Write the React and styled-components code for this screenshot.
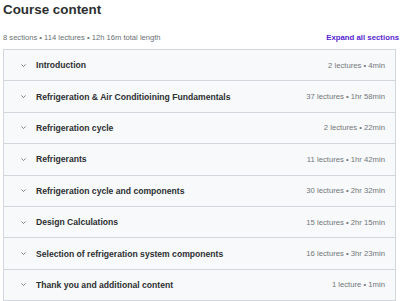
import React from "react";
import styled, { createGlobalStyle } from "styled-components";

const Global = createGlobalStyle`
  html, body { margin: 0; padding: 0; background: #fff; }
  body { font-family: "Liberation Sans", Arial, sans-serif; color: #2d2f31; }
`;

const Page = styled.div`
  padding: 0 1px 0 3px;
  width: 400px;
  box-sizing: border-box;
`;

const Title = styled.h2`
  margin: 0;
  padding-top: 2px;
  font-size: 13.4px;
  line-height: 16px;
  font-weight: 700;
  color: #2d2f31;
`;

const Header = styled.div`
  display: flex;
  justify-content: space-between;
  align-items: center;
  margin-top: 12px;
  height: 14px;
`;

const Summary = styled.span`
  font-size: 7.6px;
  color: #6a6f73;
`;

const Expand = styled.button`
  border: 0;
  background: none;
  padding: 0;
  font-family: inherit;
  font-size: 7.8px;
  font-weight: 700;
  color: #5624d0;
`;

const List = styled.div`
  margin-top: 5px;
  margin-right: 3px;
  border: 1px solid #d1d7dc;
  border-bottom: 0;
`;

const Row = styled.div`
  display: flex;
  align-items: center;
  height: 30.4px;
  background: #f7f9fa;
  border-bottom: 1px solid #d1d7dc;
  padding: 0 10px 0 16px;
`;

const Chevron = styled.svg`
  width: 7px;
  height: 7px;
  flex: none;
  margin-right: 9px;
`;

const Name = styled.span`
  flex: 1;
  font-size: 8.6px;
  font-weight: 700;
  color: #2d2f31;
`;

const Meta = styled.span`
  font-size: 7.7px;
  color: #73777b;
`;

const sections = [
  ["Introduction", "2 lectures • 4min"],
  ["Refrigeration & Air Conditioining Fundamentals", "37 lectures • 1hr 58min"],
  ["Refrigeration cycle", "2 lectures • 22min"],
  ["Refrigerants", "11 lectures • 1hr 42min"],
  ["Refrigeration cycle and components", "30 lectures • 2hr 32min"],
  ["Design Calculations", "15 lectures • 2hr 15min"],
  ["Selection of refrigeration system components", "16 lectures • 3hr 23min"],
  ["Thank you and additional content", "1 lecture • 1min"],
];

export default function App() {
  return (
    <Page>
      <Global />
      <Title>Course content</Title>
      <Header>
        <Summary>8 sections • 114 lectures • 12h 16m total length</Summary>
        <Expand>Expand all sections</Expand>
      </Header>
      <List>
        {sections.map(([n, m]) => (
          <Row key={n}>
            <Chevron viewBox="0 0 10 10">
              <path d="M2 3.5 L5 6.5 L8 3.5" fill="none" stroke="#6a6f73" strokeWidth="1.2" />
            </Chevron>
            <Name>{n}</Name>
            <Meta>{m}</Meta>
          </Row>
        ))}
      </List>
    </Page>
  );
}
